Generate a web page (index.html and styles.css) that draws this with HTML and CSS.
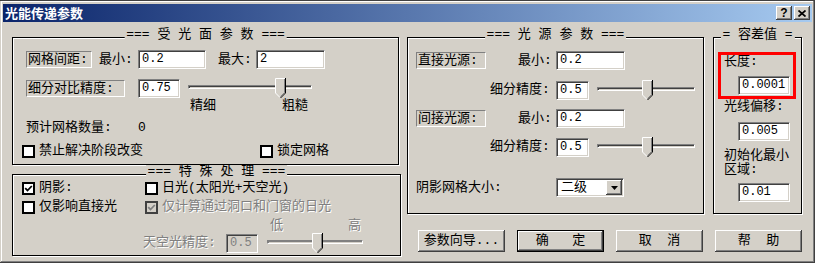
FILE: index.html
```html
<!DOCTYPE html>
<html lang="zh-CN">
<head>
<meta charset="utf-8">
<title>光能传递参数</title>
<link rel="stylesheet" href="styles.css">
</head>
<body>
<div class="window">
  <div class="titlebar">
    <span class="title">光能传递参数</span>
    <div class="tb-buttons">
      <span class="tb-btn tb-help">?</span>
      <span class="tb-btn tb-close"><svg width="8" height="7" viewBox="0 0 8 7"><path d="M0.5 0.5 L7.5 6.5 M7.5 0.5 L0.5 6.5" stroke="#000" stroke-width="1.7" fill="none"/></svg></span>
    </div>
  </div>
  <div class="content">
    <div class="col-left">
      <div class="group g-recv">
        <div class="gtitle">=== 受 光 面 参 数 ===</div>
        <div class="row row-a">
          <span class="static w66">网格间距:</span>
          <span>最小:</span>
          <span class="edit w68">0.2</span>
          <span>最大:</span>
          <span class="edit w69">2</span>
        </div>
        <div class="row row-b">
          <span class="static w99">细分对比精度:</span>
          <span class="edit w42">0.75</span>
          <div class="slider">
            <div class="track"></div>
            <svg class="thumb thumb-g1" width="11" height="20" viewBox="0 0 11 20"><path d="M0 0 H11 V15 L5.5 20.5 L0 15 Z" fill="#d4d0c8"/><path d="M0.5 15 V0.5 H10" stroke="#fff" fill="none"/><path d="M0.5 15 L5 19.5" stroke="#fff" fill="none"/><path d="M10.5 0 V15 L5.5 20" stroke="#000" fill="none"/><path d="M9.5 1 V14.6 L5.5 18.6" stroke="#808080" fill="none"/></svg>
          </div>
        </div>
        <div class="row row-c"><span>精细</span><span>粗糙</span></div>
        <div class="row row-d"><span>预计网格数量:</span><span>0</span></div>
        <div class="row row-e">
          <div class="check"><span class="cb"></span><span>禁止解决阶段改变</span></div>
          <div class="check"><span class="cb"></span><span>锁定网格</span></div>
        </div>
      </div>
      <div class="group g-special">
        <div class="gtitle gtitle-shift">=== 特 殊 处 理 ===</div>
        <div class="row s-1">
          <div class="check"><span class="cb"><svg width="9" height="9" viewBox="0 0 9 9"><path d="M1.2 4.2 L3.5 6.5 L7.8 2" stroke="#000" stroke-width="1.8" fill="none"/></svg></span><span>阴影:</span></div>
          <div class="check"><span class="cb"></span><span>日光(太阳光+天空光)</span></div>
        </div>
        <div class="row s-2">
          <div class="check"><span class="cb"></span><span>仅影响直接光</span></div>
          <div class="check disabled"><span class="cb cb-disabled"><svg width="9" height="9" viewBox="0 0 9 9"><path d="M1.2 4.2 L3.5 6.5 L7.8 2" stroke="#808080" stroke-width="1.8" fill="none"/></svg></span><span>仅计算通过洞口和门窗的日光</span></div>
        </div>
        <div class="row s-3 disabled"><span>低</span><span>高</span></div>
        <div class="row s-4">
          <span class="disabled">天空光精度:</span>
          <span class="edit edit-disabled w32">0.5</span>
          <div class="slider">
            <div class="track track-disabled"></div>
            <svg class="thumb thumb-g4" width="11" height="20" viewBox="0 0 11 20"><path d="M0 0 H11 V15 L5.5 20.5 L0 15 Z" fill="#d4d0c8"/><path d="M0.5 15 V0.5 H10" stroke="#fff" fill="none"/><path d="M0.5 15 L5 19.5" stroke="#fff" fill="none"/><path d="M10.5 0 V15 L5.5 20" stroke="#000" fill="none"/><path d="M9.5 1 V14.6 L5.5 18.6" stroke="#808080" fill="none"/></svg>
          </div>
        </div>
      </div>
    </div>
    <div class="col-right">
      <div class="top-row">
        <div class="group g-light">
          <div class="gtitle">=== 光 源 参 数 ===</div>
          <div class="row l-1">
            <span class="static w70">直接光源:</span>
            <span>最小:</span>
            <span class="edit w69">0.2</span>
          </div>
          <div class="row l-2">
            <span>细分精度:</span>
            <span class="edit w33">0.5</span>
            <div class="slider">
              <div class="track"></div>
              <svg class="thumb thumb-g2" width="11" height="20" viewBox="0 0 11 20"><path d="M0 0 H11 V15 L5.5 20.5 L0 15 Z" fill="#d4d0c8"/><path d="M0.5 15 V0.5 H10" stroke="#fff" fill="none"/><path d="M0.5 15 L5 19.5" stroke="#fff" fill="none"/><path d="M10.5 0 V15 L5.5 20" stroke="#000" fill="none"/><path d="M9.5 1 V14.6 L5.5 18.6" stroke="#808080" fill="none"/></svg>
            </div>
          </div>
          <div class="row l-1 l-3">
            <span class="static w70">间接光源:</span>
            <span>最小:</span>
            <span class="edit w69">0.2</span>
          </div>
          <div class="row l-2 l-4">
            <span>细分精度:</span>
            <span class="edit w33">0.5</span>
            <div class="slider">
              <div class="track"></div>
              <svg class="thumb thumb-g2" width="11" height="20" viewBox="0 0 11 20"><path d="M0 0 H11 V15 L5.5 20.5 L0 15 Z" fill="#d4d0c8"/><path d="M0.5 15 V0.5 H10" stroke="#fff" fill="none"/><path d="M0.5 15 L5 19.5" stroke="#fff" fill="none"/><path d="M10.5 0 V15 L5.5 20" stroke="#000" fill="none"/><path d="M9.5 1 V14.6 L5.5 18.6" stroke="#808080" fill="none"/></svg>
            </div>
          </div>
          <div class="row l-5">
            <span>阴影网格大小:</span>
            <div class="combo">
              <span class="combo-text">二级</span>
              <span class="drop"><svg width="7" height="4" viewBox="0 0 7 4"><path d="M0 0 H7 L3.5 4 Z" fill="#000"/></svg></span>
            </div>
          </div>
        </div>
        <div class="group g-tol">
          <div class="gtitle">= 容差值 =</div>
          <div class="t-label">长度:</div>
          <div class="edit t-edit t-edit-1">0.0001</div>
          <div class="t-label t-gap-1">光线偏移:</div>
          <div class="edit t-edit">0.005</div>
          <div class="t-label t-gap-2">初始化最小<br>区域:</div>
          <div class="edit t-edit t-edit-3">0.01</div>
          <div class="highlight"></div>
        </div>
      </div>
      <div class="buttons">
        <span class="btn">参数向导...</span>
        <span class="btn btn-default">确&nbsp;&nbsp;&nbsp;定</span>
        <span class="btn">取&nbsp;&nbsp;消</span>
        <span class="btn">帮&nbsp;&nbsp;助</span>
      </div>
    </div>
  </div>
</div>
</body>
</html>
```

FILE: styles.css
```css
html, body {
  margin: 0;
  padding: 0;
  background: #d4d0c8;
  overflow: hidden;
}

body {
  font-family: "Liberation Mono", "Noto Sans CJK SC", monospace;
  font-size: 13px;
  line-height: 14px;
  color: #000;
}

.window {
  width: 815px;
  height: 263px;
  box-sizing: border-box;
  padding: 4px 3px 3px 3px;
  background: #d4d0c8;
  box-shadow: inset 0 1px #404040, inset -1px -1px #404040, inset 1px 0 #d4d0c8, inset -2px -2px #808080, inset 2px 2px #fff;
}

.titlebar {
  height: 18px;
  display: flex;
  align-items: center;
  justify-content: space-between;
  padding: 0 2px 0 2px;
  background: linear-gradient(to right, #0a246a, #a6caf0);
}

.title {
  color: #fff;
  font-weight: bold;
  font-family: "Noto Sans CJK SC", sans-serif;
  font-size: 13px;
}

.tb-buttons {
  display: flex;
  gap: 2px;
}

.tb-btn {
  width: 16px;
  height: 14px;
  box-sizing: border-box;
  display: flex;
  align-items: center;
  justify-content: center;
  background: #d4d0c8;
  box-shadow: inset -1px -1px #404040, inset 1px 1px #fff, inset -2px -2px #808080;
}

.tb-help {
  font-family: "Liberation Sans", sans-serif;
  font-weight: bold;
  font-size: 12px;
  line-height: 12px;
}

.content {
  display: flex;
  padding: 15px 0 0 9px;
}

.col-left {
  width: 388px;
  display: flex;
  flex-direction: column;
  gap: 9px;
}

.col-right {
  margin-left: 7px;
  display: flex;
  flex-direction: column;
}

.top-row {
  display: flex;
  gap: 9px;
}

.group {
  position: relative;
  box-sizing: border-box;
  border: 1px solid #000;
  box-shadow: inset 1px 1px #fff, 1px 1px #fff;
}

.gtitle {
  position: absolute;
  top: -10px;
  left: 50%;
  transform: translateX(-50%);
  background: #d4d0c8;
  padding: 0 2px;
  white-space: pre;
}

.gtitle-shift {
  left: calc(50% + 10px);
}

.g-recv {
  width: 387px;
  height: 128px;
  padding: 12px 0 0 13px;
}

.g-special {
  width: 389px;
  height: 82px;
  padding: 6px 0 0 9px;
}

.g-light {
  width: 297px;
  height: 177px;
  padding: 13px 0 0 8px;
}

.g-tol {
  width: 89px;
  height: 177px;
  padding: 17px 0 0 10px;
}

.row {
  display: grid;
  align-items: center;
  white-space: nowrap;
}

.row-a { height: 19px; grid-template-columns: 73px 39px 80px 38px 69px; }
.row-b { height: 19px; margin-top: 9px; grid-template-columns: 112px 50px 124px; }
.row-c { height: 14px; margin-top: 2px; padding-left: 164px; grid-template-columns: 92px auto; }
.row-d { height: 14px; margin-top: 8px; grid-template-columns: 112px auto; }
.row-e { height: 14px; margin-top: 9px; margin-left: -4px; grid-template-columns: 238px auto; }

.s-1 { height: 14px; grid-template-columns: 123px auto; }
.s-2 { height: 14px; margin-top: 5px; grid-template-columns: 123px auto; }
.s-3 { height: 14px; margin-top: 5px; padding-left: 248px; grid-template-columns: 78px auto; }
.s-4 { height: 19px; padding-left: 121px; grid-template-columns: 83px 41px 96px; }

.l-1 { height: 19px; grid-template-columns: 102px 38px 69px; }
.l-2 { height: 19px; margin-top: 10px; padding-left: 74px; grid-template-columns: 66px 41px 98px; }
.l-4 { margin-top: 9px; }
.l-3 { margin-top: 10px; }
.l-5 { height: 19px; margin-top: 22px; grid-template-columns: 140px 68px; }

.static {
  height: 17px;
  box-sizing: border-box;
  border: 1px solid;
  border-color: #808080 #fff #fff #808080;
  line-height: 15px;
  padding-left: 1px;
}

.w66 { width: 66px; }
.w99 { width: 99px; }
.w70 { width: 70px; }
.w68 { width: 68px; }
.w69 { width: 69px; }
.w42 { width: 42px; }
.w33 { width: 33px; }
.w32 { width: 32px; }

.edit {
  height: 19px;
  box-sizing: border-box;
  background: #fff;
  border: 1px solid;
  border-color: #808080 #fff #fff #808080;
  box-shadow: inset 1px 1px #404040, inset -1px -1px #d4d0c8;
  font-family: "Liberation Mono", monospace;
  font-size: 12px;
  line-height: 17px;
  padding-left: 3px;
}

.edit-disabled {
  background: #d4d0c8;
  color: #808080;
}

.slider {
  position: relative;
  height: 20px;
}

.track {
  margin-top: 7px;
  height: 4px;
  box-sizing: border-box;
  border: 1px solid;
  border-color: #808080 #fff #fff #808080;
  box-shadow: inset 1px 1px #404040;
}

.track-disabled {
  box-shadow: inset 1px 1px #808080;
}

.thumb {
  position: absolute;
  top: 0;
}

.thumb-g1 { left: 87px; }
.thumb-g2 { left: 45px; }
.thumb-g4 { left: 45px; }

.check {
  display: flex;
  align-items: center;
  gap: 4px;
}

.cb {
  width: 13px;
  height: 13px;
  box-sizing: border-box;
  border: 2px solid #000;
  background: #fff;
  display: flex;
  align-items: center;
  justify-content: center;
}

.cb-disabled {
  background: #d4d0c8;
  border-color: #404040;
}

.disabled {
  color: #808080;
  text-shadow: 1px 1px #fff;
}

.combo {
  width: 68px;
  height: 19px;
  box-sizing: border-box;
  background: #fff;
  border: 1px solid;
  border-color: #808080 #fff #fff #808080;
  box-shadow: inset 1px 1px #404040, inset -1px -1px #d4d0c8;
  display: flex;
  align-items: center;
  justify-content: space-between;
  padding: 1px;
}

.combo-text {
  padding-left: 3px;
}

.drop {
  width: 16px;
  height: 15px;
  box-sizing: border-box;
  background: #d4d0c8;
  box-shadow: inset -1px -1px #404040, inset 1px 1px #fff, inset -2px -2px #808080;
  display: flex;
  align-items: center;
  justify-content: center;
}

.t-label {
  line-height: 14px;
}

.t-edit {
  width: 52px;
  margin: 8px 0 0 14px;
}

.t-edit-1 { margin-top: 7px; }
.t-edit-3 { margin-top: 6px; }
.t-gap-1 { margin-top: 5px; }
.t-gap-2 { margin-top: 8px; }

.highlight {
  position: absolute;
  left: 4px;
  top: 14px;
  width: 78px;
  height: 47px;
  box-sizing: border-box;
  border: 3px solid #ff0000;
}

.buttons {
  display: flex;
  gap: 12px;
  margin-top: 16px;
  padding-left: 11px;
}

.btn {
  width: 87px;
  height: 22px;
  box-sizing: border-box;
  display: flex;
  align-items: center;
  justify-content: center;
  white-space: pre;
  background: #d4d0c8;
  box-shadow: inset -1px -1px #404040, inset 1px 1px #fff, inset -2px -2px #808080;
}

.btn-default {
  box-shadow: inset 0 0 0 1px #000, inset -2px -2px #404040, inset 2px 2px #fff, inset -3px -3px #808080;
}
```
